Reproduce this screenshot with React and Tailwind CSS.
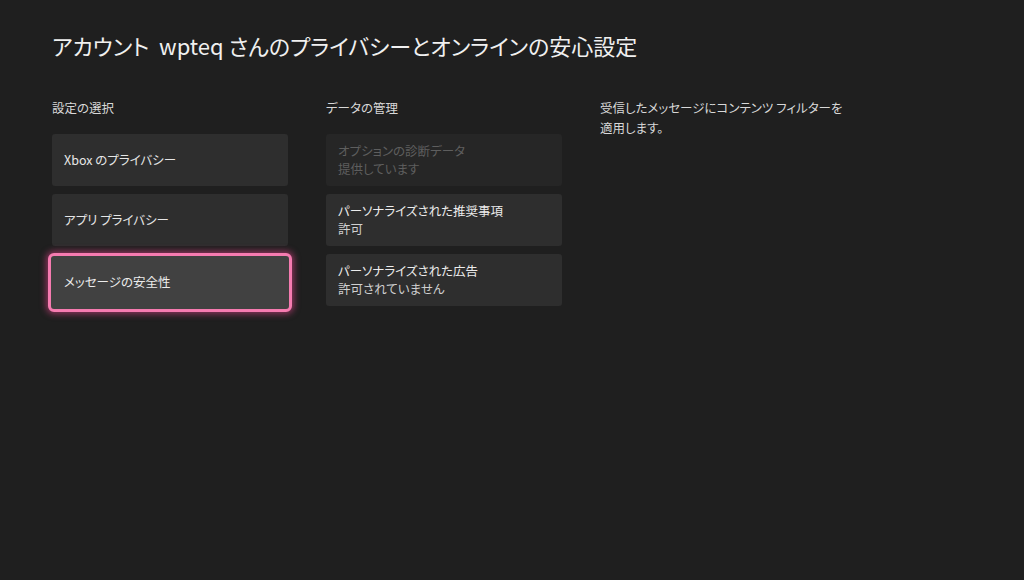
export default function App() {
  const font = { fontFamily: '"Noto Sans CJK JP", "Noto Sans", sans-serif' };
  return (
    <div
      className="w-[1024px] h-[580px] bg-[#1f1f1f] text-[#e8e8e8] overflow-hidden pl-[52px] pt-[27px] [font-feature-settings:'palt']"
      style={font}
    >
      <h1 className="text-[22px] leading-[36px] font-normal text-[#f0f0f0]">
        アカウント&nbsp; wpteq さんのプライバシーとオンラインの安心設定
      </h1>
      <div className="flex mt-[35px] gap-[38px]">
        <div className="w-[236px] flex flex-col">
          <div className="text-[12.5px] leading-[20px] text-[#d8d8d8] h-[20px]">設定の選択</div>
          <div className="flex flex-col gap-[8px] mt-[16px]">
            <div className="h-[52px] rounded-[3px] bg-[#2e2e2e] px-3 flex items-center text-[12.5px] text-[#e6e6e6]">
              Xbox のプライバシー
            </div>
            <div className="h-[52px] rounded-[3px] bg-[#2e2e2e] px-3 flex items-center text-[12.5px] text-[#e6e6e6]">
              アプリ&nbsp;プライバシー
            </div>
            <div className="-mx-[4px] -mt-[1px] h-[59px] rounded-[6px] border-[3px] border-[#f67bb0] bg-[#414141] shadow-[0_0_6px_2px_rgba(230,70,140,0.55)] pl-[13px] flex items-center text-[12.5px] text-[#ececec]">
              メッセージの安全性
            </div>
          </div>
        </div>
        <div className="w-[236px] flex flex-col">
          <div className="text-[12.5px] leading-[20px] text-[#d8d8d8] h-[20px]">データの管理</div>
          <div className="flex flex-col gap-[8px] mt-[16px]">
            <div className="h-[52px] rounded-[3px] bg-[#262626] px-3 flex flex-col justify-center text-[12.5px] leading-[18px] text-[#5e5e5e]">
              <span>オプションの診断データ</span>
              <span>提供しています</span>
            </div>
            <div className="h-[52px] rounded-[3px] bg-[#2e2e2e] px-3 flex flex-col justify-center text-[12.5px] leading-[18px]">
              <span className="text-[#ececec]">パーソナライズされた推奨事項</span>
              <span className="text-[#d0d0d0]">許可</span>
            </div>
            <div className="h-[52px] rounded-[3px] bg-[#2e2e2e] px-3 flex flex-col justify-center text-[12.5px] leading-[18px]">
              <span className="text-[#ececec]">パーソナライズされた広告</span>
              <span className="text-[#d0d0d0]">許可されていません</span>
            </div>
          </div>
        </div>
        <div className="w-[300px] text-[12.5px] leading-[20px] text-[#d8d8d8]">
          受信したメッセージにコンテンツ フィルターを
          <br />
          適用します。
        </div>
      </div>
    </div>
  );
}
